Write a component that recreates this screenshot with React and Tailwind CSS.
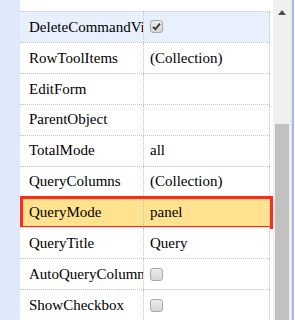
import React from "react";

const rows = [
  { name: "DeleteCommandVi", value: "check", checked: true, active: true },
  { name: "RowToolItems", value: "(Collection)" },
  { name: "EditForm", value: "" },
  { name: "ParentObject", value: "" },
  { name: "TotalMode", value: "all" },
  { name: "QueryColumns", value: "(Collection)" },
  { name: "QueryMode", value: "panel", selected: true },
  { name: "QueryTitle", value: "Query" },
  { name: "AutoQueryColumn", value: "check" },
  { name: "ShowCheckbox", value: "check" },
];

function Checkbox({ checked }) {
  return (
    <div className="w-[13px] h-[13px] rounded-[3px] border border-[#a9a9a9] bg-gradient-to-b from-[#ececec] to-[#d6d6d6] flex items-center justify-center">
      {checked && (
        <svg width="9" height="9" viewBox="0 0 9 9">
          <path d="M1 4.8 L3.4 7.2 L8 1.6" stroke="#333" strokeWidth="1.8" fill="none" />
        </svg>
      )}
    </div>
  );
}

function Row({ row }) {
  const bg = row.selected ? "bg-[#ffe28f]" : row.active ? "bg-[#e8f0fe]" : "bg-white";
  return (
    <div className={`relative flex h-[31px] border-t border-dotted border-[#c4c4c4] ${bg}`}>
      <div className="w-[124px] shrink-0 pl-[9px] overflow-hidden whitespace-nowrap flex items-center border-r border-dotted border-[#c4c4c4]">
        {row.name}
      </div>
      <div className="flex-1 pl-[6px] flex items-center whitespace-nowrap overflow-hidden border-r border-dotted border-[#c4c4c4]">
        {row.value === "check" ? <Checkbox checked={row.checked} /> : row.value}
      </div>
      {row.selected && (
        <div className="absolute left-0 -right-[3px] -top-[1px] -bottom-[2px] border-[3px] border-[#ff2a1a] pointer-events-none"></div>
      )}
    </div>
  );
}

export default function App() {
  return (
    <div className="w-[295px] h-[320px] overflow-hidden flex bg-white text-[15px] text-black" style={{ fontFamily: '"Liberation Serif", "Times New Roman", serif' }}>
      <div className="w-[20px] shrink-0 bg-[#dfe9fb]"></div>
      <div className="w-[250px] shrink-0 pt-[11px] flex flex-col">
        {rows.map((r) => (
          <Row key={r.name} row={r} />
        ))}
      </div>
      <div className="w-[3px] shrink-0 bg-white"></div>
      <div className="w-[18px] shrink-0 bg-[#f0f0f0] flex flex-col items-center">
        <div className="h-[24px] flex items-center justify-center">
          <svg width="8" height="5" viewBox="0 0 8 5">
            <path d="M0 5 L4 0 L8 5 Z" fill="#505050" />
          </svg>
        </div>
        <div className="mt-[100px] w-[14px] flex-1 bg-[#c1c1c1]"></div>
      </div>
      <div className="w-[1px] shrink-0 bg-[#e3e3e3]"></div>
      <div className="w-[3px] shrink-0 bg-white border-l-2 border-[#a3bde6]"></div>
    </div>
  );
}
